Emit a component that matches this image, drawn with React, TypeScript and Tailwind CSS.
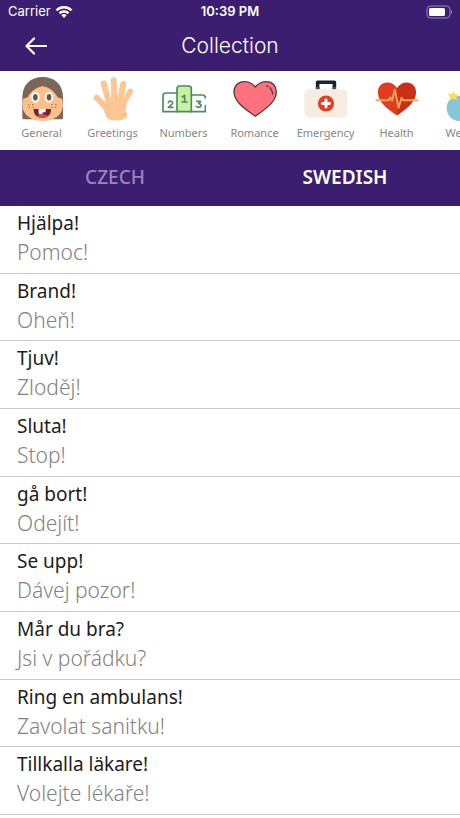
import { ReactNode, useState } from "react";

interface Category {
  name: string;
  icon: ReactNode;
}

interface Phrase {
  swedish: string;
  czech: string;
}

const phrases: Phrase[] = [
  { swedish: "Hjälpa!", czech: "Pomoc!" },
  { swedish: "Brand!", czech: "Oheň!" },
  { swedish: "Tjuv!", czech: "Zloděj!" },
  { swedish: "Sluta!", czech: "Stop!" },
  { swedish: "gå bort!", czech: "Odejít!" },
  { swedish: "Se upp!", czech: "Dávej pozor!" },
  { swedish: "Mår du bra?", czech: "Jsi v pořádku?" },
  { swedish: "Ring en ambulans!", czech: "Zavolat sanitku!" },
  { swedish: "Tillkalla läkare!", czech: "Volejte lékaře!" },
];

function FaceIcon() {
  return (
    <svg viewBox="30 15 132 132" className="size-11" aria-hidden="true">
      <path d="M37 138V76C37 38 62 15 98 15s61 23 61 61v62q0 4-4 4H41q-4 0-4-4Z" fill="#7b6759" />
      <path d="M40 80C64 75 84 61 98 43c14 18 34 32 58 37 3 9 4 24 0 35-8 20-30 32-58 32s-50-12-58-32c-4-11-3-26 0-35Z" fill="#fdc08b" />
      <path d="M53 76C65 55 81 45 98 43c17 2 33 12 45 33Z" fill="#fdc08b" />
      <ellipse cx="76" cy="76" rx="13" ry="16" fill="#fff" />
      <ellipse cx="117" cy="76" rx="13" ry="16" fill="#fff" />
      <ellipse cx="76" cy="76" rx="7" ry="10" fill="#6b5447" />
      <ellipse cx="117" cy="76" rx="7" ry="10" fill="#6b5447" />
      <path d="M71 111h52c1 16-10 27-26 27s-27-11-26-27Z" fill="#7d1c35" />
      <path d="M80 131c9-5 25-5 34 0-9 9-25 9-34 0Z" fill="#d8485a" />
      <path d="M86 111h21v10h-9v6h-9q-3 0-3-3Z" fill="#fff" />
      <g fill="#a5532d">
        <circle cx="56" cy="98" r="2" />
        <circle cx="68" cy="98" r="2" />
        <circle cx="58" cy="106" r="2" />
        <circle cx="70" cy="106" r="2" />
        <circle cx="126" cy="98" r="2" />
        <circle cx="138" cy="98" r="2" />
        <circle cx="126" cy="106" r="2" />
        <circle cx="137" cy="106" r="2" />
      </g>
    </svg>
  );
}

function HandIcon() {
  return (
    <svg viewBox="243 15 132 132" className="size-11" aria-hidden="true">
      <g stroke="#fdc793" strokeLinecap="round" fill="none">
        <path d="m260 77 34 36" strokeWidth="18" />
        <path d="m281 34 17 60" strokeWidth="18" />
        <path d="m311 25 2 65" strokeWidth="18" />
        <path d="m340 36-12 57" strokeWidth="18" />
        <path d="m361 58-24 42" strokeWidth="17" />
      </g>
      <path d="M288 80c16-6 40-5 54 4l8 18c-4 8-3 14 0 21 4 11-2 17-14 20-10 3-26 3-36 0-14-5-14-19-20-32Z" fill="#fdc793" />
      <path d="M277 92q10 11 22 13M290 70l3 12M320 71v8M332 73l-2 7M343 96q-6 4-8 12M336 128q7 3 12-1" stroke="#e9ac76" strokeWidth="2" strokeLinecap="round" fill="none" />
    </svg>
  );
}

function PodiumIcon() {
  return (
    <svg viewBox="36 15 132 132" className="size-11" aria-hidden="true">
      <path d="M81 119V50q0-8 8-8h27q8 0 8 8v69Z" fill="#c9f2a0" />
      <g stroke="#4d8b64" strokeWidth="5" strokeLinecap="round" strokeLinejoin="round" fill="none">
        <path d="M166 101v18H39V71q0-8 8-8h34" />
        <path d="M81 119V50q0-8 8-8h27q8 0 8 8v69" />
        <path d="M124 69h33q9 0 9 9" />
        <path d="m97 75 7-5v20M96 90h15" />
        <path d="M55 92q1-5 7-5 6 1 6 6 0 3-13 13h14" />
        <path d="M140 88h12l-6 7q7 0 7 5 0 6-7 6-5 0-7-3" />
      </g>
    </svg>
  );
}

function HeartIcon() {
  return (
    <svg viewBox="249 15 132 132" className="size-11" aria-hidden="true">
      <path d="M316 133C289 113 252 91 252 59c0-17 13-30 30-30 15 0 27 7 34 16 7-9 19-16 34-16 17 0 29 13 29 30 0 32-36 54-63 74Z" fill="#ff727d" stroke="#503c46" strokeWidth="4" strokeLinejoin="round" />
      <path d="m350 42 4 1M360 47q7 7 8 19" stroke="#503c46" strokeWidth="4" strokeLinecap="round" fill="none" />
    </svg>
  );
}

function FirstAidIcon() {
  return (
    <svg viewBox="42 15 136 132" className="h-11 w-11" aria-hidden="true">
      <path d="M84 51V29h52v22" stroke="#17242b" strokeWidth="11" strokeLinejoin="round" fill="none" />
      <path d="M79 44h11v8H79ZM130 44h11v8h-11Z" fill="#42515a" />
      <rect x="43" y="51" width="133" height="87" rx="14" fill="#f6ece2" />
      <circle cx="110" cy="95" r="25" fill="#e1401f" />
      <path d="M110 84v22M99 95h22" stroke="#fff" strokeWidth="9" strokeLinecap="round" />
    </svg>
  );
}

function HealthIcon() {
  return (
    <svg viewBox="255 15 136 132" className="h-11 w-11" aria-hidden="true">
      <path d="M323 132C296 113 264 92 264 60c0-17 12-30 29-30 13 0 23 6 30 17Z" fill="#e33b20" />
      <path d="M323 132c27-19 59-40 59-72 0-17-12-30-29-30-13 0-23 6-30 17Z" fill="#cc2f18" />
      <path d="M257 85h40l5-9 6 10 8-34 12 56 9-31 5 8h47" stroke="#fbaa58" strokeWidth="6" strokeLinejoin="round" fill="none" />
    </svg>
  );
}

function WeatherIcon() {
  return (
    <svg viewBox="468 15 132 132" className="size-11" aria-hidden="true">
      <path d="M508 72c-22 0-38 16-38 36 0 22 16 39 38 39h80V72Z" fill="#88c5d6" />
      <path d="m490 58 5 8 10 1-6 8 3 10-12-4-11 4 2-10-8-8 11-1Z" fill="#f9dc57" />
    </svg>
  );
}

const categories: Category[] = [
  { name: "General", icon: <FaceIcon /> },
  { name: "Greetings", icon: <HandIcon /> },
  { name: "Numbers", icon: <PodiumIcon /> },
  { name: "Romance", icon: <HeartIcon /> },
  { name: "Emergency", icon: <FirstAidIcon /> },
  { name: "Health", icon: <HealthIcon /> },
  { name: "Weather", icon: <WeatherIcon /> },
];

function StatusBar() {
  return (
    <div className="grid h-6 grid-cols-3 items-center px-2 font-['Inter',sans-serif] text-[13px]">
      <div className="flex items-center gap-1">
        <span>Carrier</span>
        <svg viewBox="0 0 18 14" className="h-[14px] w-[18px]" aria-label="Wi-Fi">
          <g stroke="#fff" strokeWidth="2.6" fill="none">
            <path d="M1.5 5.4a10.6 10.6 0 0 1 15 0" />
            <path d="M4.5 8.3a6.4 6.4 0 0 1 9 0" />
          </g>
          <path d="m9 13 2.6-2.7a3.7 3.7 0 0 0-5.2 0Z" fill="#fff" />
        </svg>
      </div>
      <span className="text-center font-semibold">10:39 PM</span>
      <svg viewBox="0 0 28 14" className="h-[14px] w-7 justify-self-end" aria-label="Battery">
        <rect x="3" y="1" width="23" height="12" rx="3.5" fill="none" stroke="#9a8bb8" />
        <rect x="5" y="3" width="16" height="8" rx="1.5" fill="#fff" />
        <path d="M27 5v4q1-.6 1-2t-1-2Z" fill="#9a8bb8" />
      </svg>
    </div>
  );
}

export default function App() {
  const [language, setLanguage] = useState<"czech" | "swedish">("swedish");
  const other = language === "swedish" ? "czech" : "swedish";

  return (
    <div className="flex min-h-screen flex-col overflow-hidden bg-white font-['Noto_Sans',sans-serif]">
      <header className="bg-[#3b1e70] text-white">
        <StatusBar />
        <div className="grid h-[47px] grid-cols-[48px_1fr_48px] items-center px-3 pb-1">
          <button type="button" aria-label="Back" className="flex h-11 items-center justify-center">
            <svg viewBox="0 0 22 18" className="h-[18px] w-[22px]" aria-hidden="true">
              <path d="M9 1.5 1.5 9 9 16.5M2 9h19" fill="none" stroke="#fff" strokeWidth="2.2" strokeLinecap="round" strokeLinejoin="round" />
            </svg>
          </button>
          <h1 className="text-center font-['Inter',sans-serif] text-[21px] leading-6 font-light">Collection</h1>
        </div>
      </header>

      <nav aria-label="Categories" className="flex h-[79px] shrink-0 overflow-hidden px-[6px] pt-[6px]">
        {categories.map((category) => (
          <button key={category.name} type="button" className="flex w-[71px] shrink-0 flex-col items-center gap-1 text-[11px] leading-4 text-[#868686]">
            {category.icon}
            <span>{category.name}</span>
          </button>
        ))}
      </nav>

      <div role="tablist" className="grid h-14 shrink-0 grid-cols-2 bg-[#3b1e70] pb-[2px] text-[19px] font-medium text-white">
        <button
          type="button"
          role="tab"
          aria-selected={language === "czech"}
          onClick={() => setLanguage("czech")}
          className={language === "czech" ? "font-semibold" : "text-[#9a84bb]"}
        >
          CZECH
        </button>
        <button
          type="button"
          role="tab"
          aria-selected={language === "swedish"}
          onClick={() => setLanguage("swedish")}
          className={language === "swedish" ? "font-semibold" : "text-[#9a84bb]"}
        >
          SWEDISH
        </button>
      </div>

      <ul className="flex flex-1 flex-col pb-[3px]">
        {phrases.map((phrase) => (
          <li key={phrase.swedish} className="flex-1 border-b border-[#c8c8c8] px-[17px] pt-[3px]">
            <p className="text-[19px] leading-7 text-[#1c1c1c]">{phrase[language]}</p>
            <p className="text-[21px] leading-[30px] font-light text-[#828282]">{phrase[other]}</p>
          </li>
        ))}
      </ul>
    </div>
  );
}
